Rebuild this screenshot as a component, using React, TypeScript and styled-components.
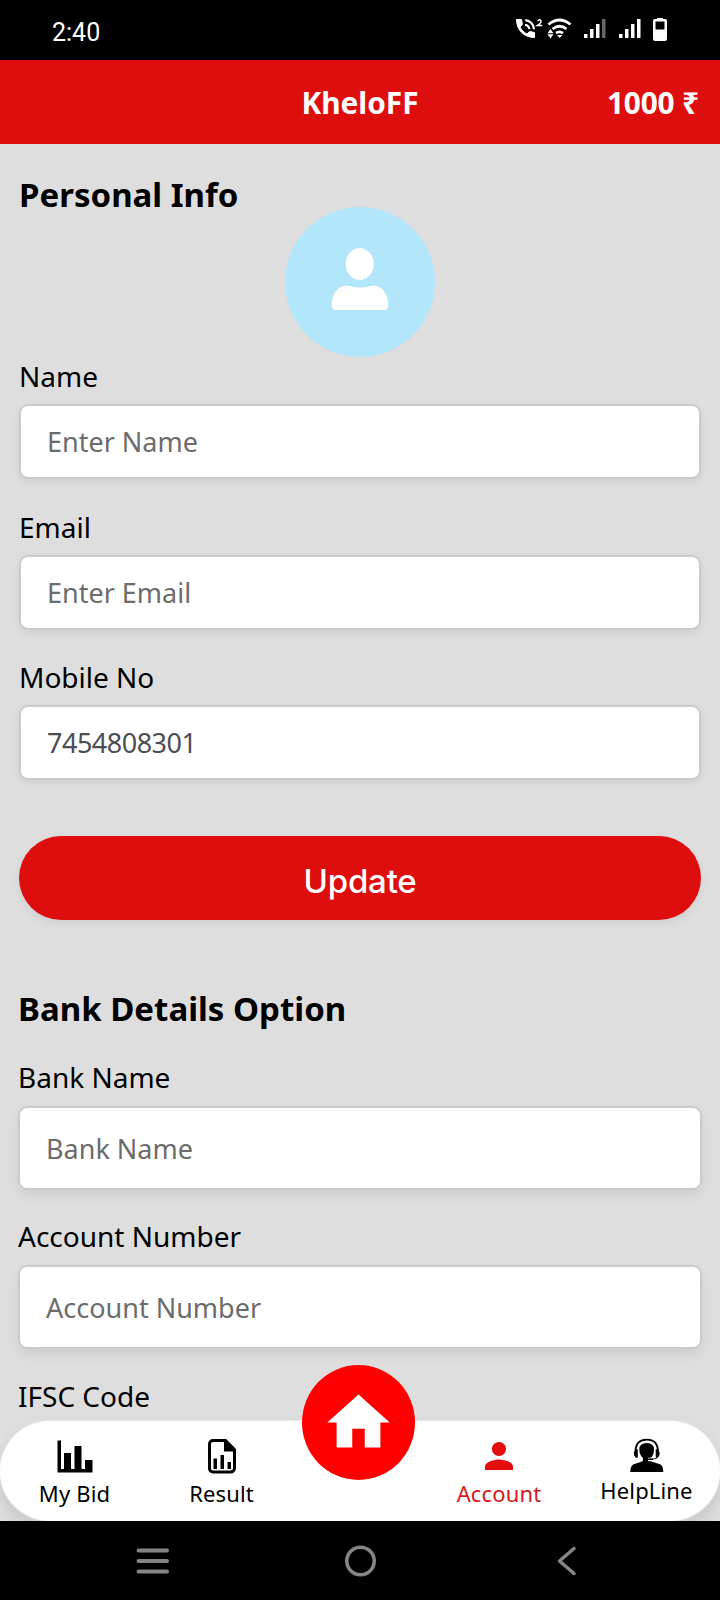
import React from "react";
import styled, { createGlobalStyle } from "styled-components";
import { MdHome, MdPerson } from "react-icons/md";

const RED = "#de0e0e";

const GlobalStyle = createGlobalStyle`
  * { box-sizing: border-box; }
  body { margin: 0; background: #dedede; font-family: "Noto Sans", sans-serif; }
`;

const Page = styled.div`
  position: relative;
  display: flex;
  flex-direction: column;
  width: 720px;
  height: 1600px;
  overflow: hidden;
  background: #dedede;
  color: #000;
`;

const StatusBar = styled.div`
  flex: none;
  display: flex;
  align-items: center;
  justify-content: space-between;
  height: 60px;
  padding: 6px 50px 0 52px;
  background: #000;
  color: #fff;
  font: 25px/30px Roboto, sans-serif;
`;

const StatusIcons = styled.svg`
  display: block;
  margin-top: -6px;
`;

const Header = styled.header`
  flex: none;
  display: grid;
  grid-template-columns: 1fr auto 1fr;
  align-items: center;
  height: 84px;
  padding: 2px 21px 0;
  background: ${RED};
  color: #fff;
  font-size: 29.8px;
  line-height: 40px;
  font-weight: 700;
`;

const Brand = styled.span`
  grid-column: 2;
`;

const Balance = styled.span`
  justify-self: end;
  letter-spacing: -0.15px;
`;

const Content = styled.main`
  flex: 1;
  display: flex;
  flex-direction: column;
  min-height: 0;
  overflow: hidden;
  padding-top: 28px;
`;

const Heading = styled.h2`
  flex: none;
  margin: 0;
  font-size: 33px;
  line-height: 46px;
  font-weight: 700;
`;

const PersonalForm = styled.section`
  display: flex;
  flex-direction: column;
  flex: none;
  padding: 0 19px;
`;

const BankForm = styled.section`
  display: flex;
  flex-direction: column;
  gap: 27.3px;
  flex: none;
  margin-top: 66px;
  padding: 0 18px;
`;

const Avatar = styled.div`
  align-self: center;
  display: flex;
  width: 150px;
  height: 150px;
  margin: -11px 0 0;
  border-radius: 50%;
  background: #b1e6fb;
`;

const Field = styled.label<{ $roomy?: boolean }>`
  display: flex;
  flex-direction: column;
  gap: ${(p) => (p.$roomy ? 10 : 9)}px;
  margin-bottom: ${(p) => (p.$roomy ? 0 : 28.7)}px;
  font-size: 28px;
  line-height: 38px;
  ${Heading} + & { margin-top: -1.3px; }
`;

const Input = styled.input<{ $tall?: boolean }>`
  width: 100%;
  height: ${(p) => (p.$tall ? 84 : 75)}px;
  padding: ${(p) => (p.$tall ? 1 : 0)}px 26px 0;
  border: 2px solid #cbcbcb;
  border-radius: 9px;
  background: #fff;
  box-shadow: 0 ${(p) => (p.$tall ? "6px 12px" : "3px 8px")} rgba(0, 0, 0, 0.07);
  color: #4d4d55;
  font: 27px "Noto Sans", sans-serif;
  letter-spacing: -0.5px;
  outline: none;
  &::placeholder { color: #6c6c6c; opacity: 1; letter-spacing: 0; }
`;

const UpdateButton = styled.button`
  height: 84px;
  margin: 27px 0 0;
  padding: 5px 0 0;
  border: 0;
  border-radius: 42px;
  background: ${RED};
  box-shadow: 0 4px 10px rgba(0, 0, 0, 0.06);
  color: #fff;
  font: 500 33px Inter, sans-serif;
  letter-spacing: -0.2px;
`;

const NavBar = styled.nav`
  position: absolute;
  left: 0;
  bottom: 79px;
  display: grid;
  grid-template-columns: 149px 145px 128px 154px 1fr;
  width: 720px;
  height: 100px;
  border-radius: 50px;
  background: #fff;
  box-shadow: 0 0 3px rgba(255, 255, 255, 0.8), 0 8px 16px rgba(0, 0, 0, 0.12);
`;

const NavItem = styled.a<{ $active?: boolean; $lift?: boolean }>`
  display: flex;
  flex-direction: column;
  align-items: center;
  gap: ${(p) => (p.$lift ? 0 : 3)}px;
  padding: 16px ${(p) => (p.$lift ? 3 : 0)}px 0 0;
  color: ${(p) => (p.$active ? "#d41a1a" : "#000")};
  font-size: 22px;
  line-height: 30px;
  letter-spacing: 0.15px;
  svg { display: block; flex: none; }
`;

const HomeButton = styled.a`
  align-self: start;
  justify-self: center;
  display: flex;
  align-items: center;
  justify-content: center;
  width: 113px;
  height: 115px;
  margin-top: -56px;
  border-radius: 50%;
  background: #f00;
  color: #fff;
`;

const SystemBar = styled.div`
  position: relative;
  z-index: 1;
  flex: none;
  display: grid;
  grid-template-columns: 306px 108px 306px;
  align-items: center;
  justify-items: center;
  height: 79px;
  background: #000;
`;

const BackIcon = styled.svg`
  justify-self: start;
  margin-left: 143px;
`;

const StatusGlyphs = () => (
  <StatusIcons width="154" height="24" viewBox="0 0 154 24" fill="#fff">
    <path d="M.5 1.500h5l1 5-2.500 2.500c1.800 3.200 3.700 5.200 7 7l2.700-2.500 4.800 1v5C8.500 19.500.5 12.500.5 1.500z" stroke="#fff" strokeWidth="1" strokeLinejoin="round" />
    <g fill="none" stroke="#fff" strokeWidth="2.200">
      <path d="M9 6.800a5 5 0 0 1 4.300 4.400M9.300 2.100a9.500 9.500 0 0 1 8.700 9.100" />
      <path d="M21.500 2.900q2.200-2.300 3.300-.3T21.500 7.500h4.800" strokeWidth="1.500" />
    </g>
    <g fill="none" stroke="#fff" strokeWidth="2.700">
      <path d="M32.500 6.500q11-9 22 0M36.500 11q7-5.500 14 0M40 15.200q3.500-2.500 7 0" />
    </g>
    <path d="M34.500 11l3 4.200h-6zM34.500 20.500l3-4.200h-6zM41 17h5.500L43.700 20z" />
    <path d="M68 16h3.500v4H68zM74 11h3.500v9H74zM80 6h3.500v14H80zM103 16h3.500v4H103zM109 11h3.500v9H109zM115 6h3.500v14H115zM121 1h3.500v19H121z" />
    <path d="M86 1h3.500v19H86z" fill="#666" />
    <path fillRule="evenodd" d="M141-1h6v2h2q2 0 2 2v18q0 2-2 2h-10q-2 0-2-2V3q0-2 2-2h2zM139.500 3.500v8h9v-8z" />
  </StatusIcons>
);

const App = () => (
  <>
    <GlobalStyle />
    <Page>
      <StatusBar>
        <span>2:40</span>
        <StatusGlyphs />
      </StatusBar>
      <Header>
        <Brand>KheloFF</Brand>
        <Balance>1000 ₹</Balance>
      </Header>
      <Content>
        <PersonalForm>
          <Heading>Personal Info</Heading>
          <Avatar>
            <svg width="150" height="150" viewBox="0 0 150 150" fill="#fff">
              <ellipse cx="74.700" cy="57" rx="14" ry="16" />
              <path d="M46.700 98C46.700 87 53 79 60.500 78.800C66 78.800 68 80.700 75 80.700S84 78.800 89.500 78.800C97 79 103.200 87 103.200 98Q103.200 103 99.500 103H50.500Q46.700 103 46.700 98Z" />
            </svg>
          </Avatar>
          <Field>Name<Input placeholder="Enter Name" /></Field>
          <Field>Email<Input placeholder="Enter Email" /></Field>
          <Field>Mobile No<Input defaultValue="7454808301" /></Field>
          <UpdateButton type="button">Update</UpdateButton>
        </PersonalForm>
        <BankForm>
          <Heading>Bank Details Option</Heading>
          <Field $roomy>Bank Name<Input $tall placeholder="Bank Name" /></Field>
          <Field $roomy>Account Number<Input $tall placeholder="Account Number" /></Field>
          <Field $roomy>IFSC Code</Field>
        </BankForm>
      </Content>
      <NavBar>
        <NavItem>
          <svg width="36" height="38" viewBox="0 0 36 38"><path d="M.5 3.500H4V32h3V16h7v16h3.500V9h7v23H28v-9h7.500v12.500H.5z" /></svg>
          My Bid
        </NavItem>
        <NavItem>
          <svg width="28" height="38" viewBox="0 0 28 38">
            <path d="M5 3.500h12.500l9 9V31a4 4 0 0 1-4 4H5a3.500 3.500 0 0 1-3.500-3.500V7A3.500 3.500 0 0 1 5 3.500z" fill="none" stroke="#000" strokeWidth="3" />
            <path d="M16 3.500h2l9 9V14.500H16zM5.500 21.500h3.500V32H5.500zM12.500 18H16v14h-3.500zM19.500 25H23v7h-3.500z" />
          </svg>
          Result
        </NavItem>
        <HomeButton><MdHome size={75} /></HomeButton>
        <NavItem $active><MdPerson size={42} style={{ margin: "-2px 0" }} color="#e30d0d" />Account</NavItem>
        <NavItem $lift>
          <svg width="34" height="38" viewBox="0 0 34 38">
            <path d="M5.500 15C5.500 6 10 2.600 16.700 2.600S28 6 28 15" fill="none" stroke="#000" strokeWidth="1.900" />
            <path d="M9.300 12.500Q9.300 6 16.700 6T24 12.500q0 5.500-3.200 8.500v3l2.200 1 7 2.300q3.300 1.300 3.300 7.700H.3q0-6.300 3.400-7.700L10.700 25l2.200-1v-3Q9.300 18 9.300 12.500z" />
            <path d="M7.800 12.300v8.500H6Q3.800 18.800 3.800 16.800t2.200-4.500zM25.700 12.300v8.500h1.800q2.200-2 2.200-4t-2.200-4.500z" />
            <path d="M27 20.500q-1 2-4.500 2H18" fill="none" stroke="#fff" strokeWidth="3.600" />
            <path d="M27.500 19.500q-.5 2.500-5 2.500" fill="none" stroke="#000" strokeWidth="1.200" />
            <path d="M17 22.200h6" stroke="#000" strokeWidth="1.500" />
          </svg>
          HelpLine
        </NavItem>
      </NavBar>
      <SystemBar>
        <svg width="34" height="28" viewBox="0 0 34 28" stroke="#858585" strokeWidth="4" strokeLinecap="round"><path d="M2.500 3.500h28.500M2.500 14h28.500M2.500 24.500h28.500" /></svg>
        <svg width="32" height="32" viewBox="0 0 32 32" fill="none" stroke="#858585" strokeWidth="3.600"><circle cx="16.500" cy="16" r="13.700" /></svg>
        <BackIcon width="20" height="30" viewBox="0 0 20 30" fill="none" stroke="#858585" strokeWidth="3.500" strokeLinecap="round" strokeLinejoin="round"><path d="M17 2.500L2.500 15 17 27.500" /></BackIcon>
      </SystemBar>
    </Page>
  </>
);

export default App;
